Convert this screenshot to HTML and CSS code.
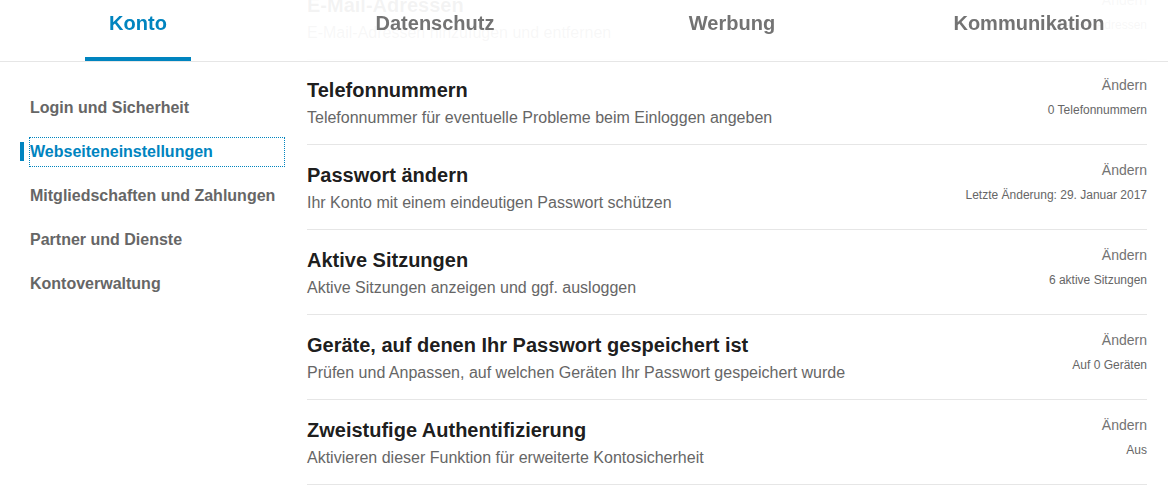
FILE: index.html
```html
<!DOCTYPE html>
<html lang="de">
<head>
<meta charset="UTF-8">
<meta name="viewport" content="width=device-width, initial-scale=1.0">
<title>Einstellungen &amp; Datenschutz</title>
<link rel="stylesheet" href="styles.css">
</head>
<body>
<header class="topbar">
  <nav class="tabs">
    <a class="tab tab-active" href="#">Konto</a>
    <a class="tab" href="#">Datenschutz</a>
    <a class="tab" href="#">Werbung</a>
    <a class="tab" href="#">Kommunikation</a>
  </nav>
</header>

<div class="page">
  <aside class="sidebar">
    <ul class="side-nav">
      <li><a href="#">Login und Sicherheit</a></li>
      <li class="active"><a class="focused" href="#">Webseiteneinstellungen</a></li>
      <li><a href="#">Mitgliedschaften und Zahlungen</a></li>
      <li><a href="#">Partner und Dienste</a></li>
      <li><a href="#">Kontoverwaltung</a></li>
    </ul>
  </aside>

  <main class="settings">
    <ul class="setting-list">
      <li class="setting">
        <div class="setting-text">
          <h3>E-Mail-Adressen</h3>
          <p>E-Mail-Adressen hinzufügen und entfernen</p>
        </div>
        <div class="setting-side">
          <a href="#">Ändern</a>
          <span>2 E-Mail-Adressen</span>
        </div>
      </li>
      <li class="setting">
        <div class="setting-text">
          <h3>Telefonnummern</h3>
          <p>Telefonnummer für eventuelle Probleme beim Einloggen angeben</p>
        </div>
        <div class="setting-side">
          <a href="#">Ändern</a>
          <span>0 Telefonnummern</span>
        </div>
      </li>
      <li class="setting">
        <div class="setting-text">
          <h3>Passwort ändern</h3>
          <p>Ihr Konto mit einem eindeutigen Passwort schützen</p>
        </div>
        <div class="setting-side">
          <a href="#">Ändern</a>
          <span>Letzte Änderung: 29. Januar 2017</span>
        </div>
      </li>
      <li class="setting">
        <div class="setting-text">
          <h3>Aktive Sitzungen</h3>
          <p>Aktive Sitzungen anzeigen und ggf. ausloggen</p>
        </div>
        <div class="setting-side">
          <a href="#">Ändern</a>
          <span>6 aktive Sitzungen</span>
        </div>
      </li>
      <li class="setting">
        <div class="setting-text">
          <h3>Geräte, auf denen Ihr Passwort gespeichert ist</h3>
          <p>Prüfen und Anpassen, auf welchen Geräten Ihr Passwort gespeichert wurde</p>
        </div>
        <div class="setting-side">
          <a href="#">Ändern</a>
          <span>Auf 0 Geräten</span>
        </div>
      </li>
      <li class="setting">
        <div class="setting-text">
          <h3>Zweistufige Authentifizierung</h3>
          <p>Aktivieren dieser Funktion für erweiterte Kontosicherheit</p>
        </div>
        <div class="setting-side">
          <a href="#">Ändern</a>
          <span>Aus</span>
        </div>
      </li>
    </ul>
  </main>
</div>
</body>
</html>
```

FILE: styles.css
```css
body {
  margin: 0;
  padding: 0;
  font-family: 'Liberation Sans', Arial, sans-serif;
  background-color: #fff;
  color: #000;
}
a {
  text-decoration: none;
}
ul {
  list-style: none;
  margin: 0;
  padding: 0;
}

/* top tabs, laid over the scrolled content */
.topbar {
  position: fixed;
  top: 0;
  left: 0;
  right: 0;
  height: 61px;
  background-color: rgba(255, 255, 255, 0.95);
  border-bottom: 1px solid #e6e6e6;
  z-index: 10;
}
.tabs {
  display: flex;
  gap: 191px;
  padding-left: 85px;
  height: 61px;
}
.tab {
  display: flex;
  justify-content: center;
  width: 106px;
  height: 61px;
  box-sizing: border-box;
  padding-top: 11px;
  font-size: 20px;
  font-weight: bold;
  line-height: 24px;
  color: #737373;
  white-space: nowrap;
}
.tab-active {
  color: #0084bf;
  border-bottom: 4px solid #0084bf;
}

.page {
  display: flex;
}

/* left menu */
.sidebar {
  width: 285px;
  flex-shrink: 0;
  box-sizing: border-box;
  padding: 94px 1px 0 30px;
}
.side-nav li {
  position: relative;
  margin-bottom: 16px;
}
.side-nav a {
  display: block;
  padding: 4px 0;
  font-size: 16px;
  font-weight: bold;
  line-height: 20px;
  color: #666;
}
.side-nav .active a {
  color: #0084bf;
}
.side-nav .active::before {
  content: '';
  position: absolute;
  left: -10px;
  top: 4px;
  width: 4px;
  height: 19px;
  background-color: #0084bf;
}
.focused {
  outline: 1px dotted #0084bf;
}

/* settings rows */
.settings {
  flex: 1;
  margin: -25px 21px 0 22px;
}
.setting {
  display: flex;
  justify-content: space-between;
  align-items: flex-start;
  padding: 15px 0 16px;
  border-bottom: 1px solid #e6e6e6;
}
.setting-text h3 {
  margin: 3px 0 0;
  font-size: 20px;
  line-height: 24px;
  color: rgba(0, 0, 0, 0.9);
}
.setting-text p {
  margin: 6px 0 0;
  font-size: 16px;
  line-height: 20px;
  color: #666;
}
.setting-side {
  display: flex;
  flex-direction: column;
  align-items: flex-end;
  text-align: right;
}
.setting-side a {
  font-size: 14px;
  line-height: 20px;
  color: #737373;
}
.setting-side span {
  margin-top: 7px;
  font-size: 12px;
  line-height: 16px;
  color: #666;
}
```
